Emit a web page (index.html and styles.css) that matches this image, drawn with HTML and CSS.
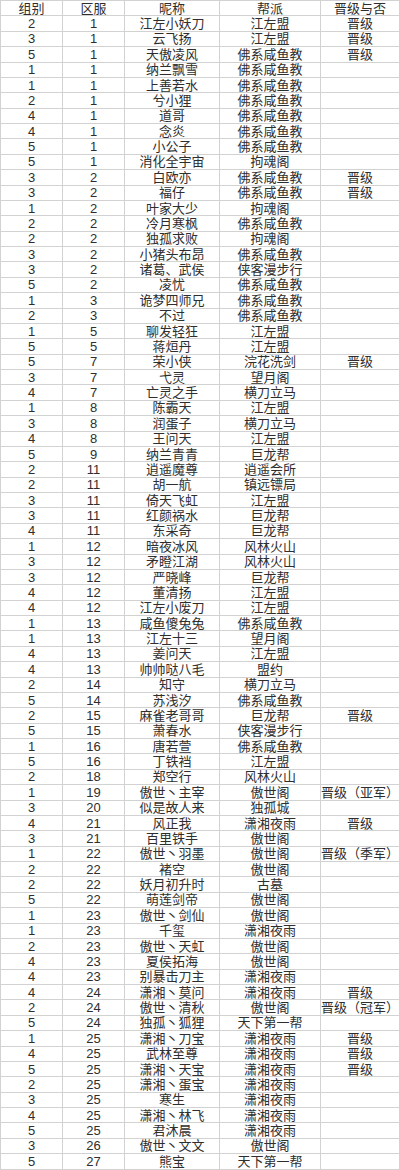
FILE: index.html
```html
<!DOCTYPE html>
<html lang="zh">
<head>
<meta charset="utf-8">
<link rel="stylesheet" href="styles.css">
</head>
<body>
<div class="sheet" id="sheet">
<div>组别</div><div>区服</div><div>昵称</div><div>帮派</div><div>晋级与否</div>
<div>2</div><div>1</div><div>江左小妖刀</div><div>江左盟</div><div>晋级</div>
<div>3</div><div>1</div><div>云飞扬</div><div>江左盟</div><div>晋级</div>
<div>5</div><div>1</div><div>天傲凌风</div><div>佛系咸鱼教</div><div>晋级</div>
<div>1</div><div>1</div><div>纳兰飘雪</div><div>佛系咸鱼教</div><div></div>
<div>1</div><div>1</div><div>上善若水</div><div>佛系咸鱼教</div><div></div>
<div>2</div><div>1</div><div>兮小狸</div><div>佛系咸鱼教</div><div></div>
<div>4</div><div>1</div><div>道哥</div><div>佛系咸鱼教</div><div></div>
<div>4</div><div>1</div><div>念炎</div><div>佛系咸鱼教</div><div></div>
<div>5</div><div>1</div><div>小公子</div><div>佛系咸鱼教</div><div></div>
<div>5</div><div>1</div><div>消化全宇宙</div><div>拘魂阁</div><div></div>
<div>3</div><div>2</div><div>白欧亦</div><div>佛系咸鱼教</div><div>晋级</div>
<div>3</div><div>2</div><div>福仔</div><div>佛系咸鱼教</div><div>晋级</div>
<div>1</div><div>2</div><div>叶家大少</div><div>拘魂阁</div><div></div>
<div>2</div><div>2</div><div>冷月寒枫</div><div>佛系咸鱼教</div><div></div>
<div>2</div><div>2</div><div>独孤求败</div><div>拘魂阁</div><div></div>
<div>3</div><div>2</div><div>小猪头布昂</div><div>佛系咸鱼教</div><div></div>
<div>3</div><div>2</div><div>诸葛、武侯</div><div>侠客漫步行</div><div></div>
<div>5</div><div>2</div><div>凌忧</div><div>佛系咸鱼教</div><div></div>
<div>1</div><div>3</div><div>诡梦四师兄</div><div>佛系咸鱼教</div><div></div>
<div>2</div><div>3</div><div>不过</div><div>佛系咸鱼教</div><div></div>
<div>1</div><div>5</div><div>聊发轻狂</div><div>江左盟</div><div></div>
<div>5</div><div>5</div><div>蒋烜丹</div><div>江左盟</div><div></div>
<div>5</div><div>7</div><div>荣小侠</div><div>浣花洗剑</div><div>晋级</div>
<div>3</div><div>7</div><div>弋灵</div><div>望月阁</div><div></div>
<div>4</div><div>7</div><div>亡灵之手</div><div>横刀立马</div><div></div>
<div>1</div><div>8</div><div>陈霸天</div><div>江左盟</div><div></div>
<div>3</div><div>8</div><div>润蛋子</div><div>横刀立马</div><div></div>
<div>4</div><div>8</div><div>王问天</div><div>江左盟</div><div></div>
<div>5</div><div>9</div><div>纳兰青青</div><div>巨龙帮</div><div></div>
<div>2</div><div>11</div><div>逍遥魔尊</div><div>逍遥会所</div><div></div>
<div>2</div><div>11</div><div>胡一航</div><div>镇远镖局</div><div></div>
<div>3</div><div>11</div><div>倚天飞虹</div><div>江左盟</div><div></div>
<div>3</div><div>11</div><div>红颜祸水</div><div>巨龙帮</div><div></div>
<div>4</div><div>11</div><div>东采奇</div><div>巨龙帮</div><div></div>
<div>1</div><div>12</div><div>暗夜冰风</div><div>风林火山</div><div></div>
<div>3</div><div>12</div><div>矛瞪江湖</div><div>风林火山</div><div></div>
<div>3</div><div>12</div><div>严晓峰</div><div>巨龙帮</div><div></div>
<div>4</div><div>12</div><div>董清扬</div><div>江左盟</div><div></div>
<div>4</div><div>12</div><div>江左小废刀</div><div>江左盟</div><div></div>
<div>1</div><div>13</div><div>咸鱼傻兔兔</div><div>佛系咸鱼教</div><div></div>
<div>1</div><div>13</div><div>江左十三</div><div>望月阁</div><div></div>
<div>4</div><div>13</div><div>姜问天</div><div>江左盟</div><div></div>
<div>4</div><div>13</div><div>帅帅哒八毛</div><div>盟约</div><div></div>
<div>2</div><div>14</div><div>知守</div><div>横刀立马</div><div></div>
<div>5</div><div>14</div><div>苏浅汐</div><div>佛系咸鱼教</div><div></div>
<div>2</div><div>15</div><div>麻雀老哥哥</div><div>巨龙帮</div><div>晋级</div>
<div>5</div><div>15</div><div>萧春水</div><div>侠客漫步行</div><div></div>
<div>1</div><div>16</div><div>唐若萱</div><div>佛系咸鱼教</div><div></div>
<div>5</div><div>16</div><div>丁铁裆</div><div>江左盟</div><div></div>
<div>2</div><div>18</div><div>郑空行</div><div>风林火山</div><div></div>
<div>1</div><div>19</div><div>傲世丶主宰</div><div>傲世阁</div><div>晋级（亚军）</div>
<div>3</div><div>20</div><div>似是故人来</div><div>独孤城</div><div></div>
<div>4</div><div>21</div><div>风正我</div><div>潇湘夜雨</div><div>晋级</div>
<div>3</div><div>21</div><div>百里铁手</div><div>傲世阁</div><div></div>
<div>1</div><div>22</div><div>傲世丶羽墨</div><div>傲世阁</div><div>晋级（季军）</div>
<div>2</div><div>22</div><div>褚空</div><div>傲世阁</div><div></div>
<div>2</div><div>22</div><div>妖月初升时</div><div>古墓</div><div></div>
<div>5</div><div>22</div><div>萌莲剑帝</div><div>傲世阁</div><div></div>
<div>1</div><div>23</div><div>傲世丶剑仙</div><div>傲世阁</div><div></div>
<div>1</div><div>23</div><div>千玺</div><div>潇湘夜雨</div><div></div>
<div>2</div><div>23</div><div>傲世丶天虹</div><div>傲世阁</div><div></div>
<div>4</div><div>23</div><div>夏侯拓海</div><div>傲世阁</div><div></div>
<div>4</div><div>23</div><div>别暴击刀主</div><div>潇湘夜雨</div><div></div>
<div>4</div><div>24</div><div>潇湘丶莫问</div><div>潇湘夜雨</div><div>晋级</div>
<div>2</div><div>24</div><div>傲世丶清秋</div><div>傲世阁</div><div>晋级（冠军）</div>
<div>5</div><div>24</div><div>独孤丶狐狸</div><div>天下第一帮</div><div></div>
<div>1</div><div>25</div><div>潇湘丶刀宝</div><div>潇湘夜雨</div><div>晋级</div>
<div>4</div><div>25</div><div>武林至尊</div><div>潇湘夜雨</div><div>晋级</div>
<div>5</div><div>25</div><div>潇湘丶天宝</div><div>潇湘夜雨</div><div>晋级</div>
<div>2</div><div>25</div><div>潇湘丶蛋宝</div><div>潇湘夜雨</div><div></div>
<div>3</div><div>25</div><div>寒生</div><div>潇湘夜雨</div><div></div>
<div>4</div><div>25</div><div>潇湘丶林飞</div><div>潇湘夜雨</div><div></div>
<div>5</div><div>25</div><div>君沐晨</div><div>潇湘夜雨</div><div></div>
<div>3</div><div>26</div><div>傲世丶文文</div><div>傲世阁</div><div></div>
<div>5</div><div>27</div><div>熊宝</div><div>天下第一帮</div><div></div>
</div>
</body>
</html>
```
FILE: styles.css
```css
html, body {
  margin: 0;
  padding: 0;
  background: #ffffff;
}
.sheet {
  display: grid;
  grid-template-columns: 61px 61px 94px 100px 78px;
  grid-auto-rows: 14.38px;
  gap: 1px;
  padding: 1px;
  width: 400px;
  box-sizing: border-box;
  background: #d2d2d2;
  font-family: "Liberation Sans", "Noto Sans CJK SC", sans-serif;
  font-size: 13px;
  color: #2e2e2e;
}
.sheet > div {
  background: #ffffff;
  display: flex;
  align-items: center;
  justify-content: center;
  line-height: 1;
  white-space: nowrap;
  overflow: visible;
}
```
